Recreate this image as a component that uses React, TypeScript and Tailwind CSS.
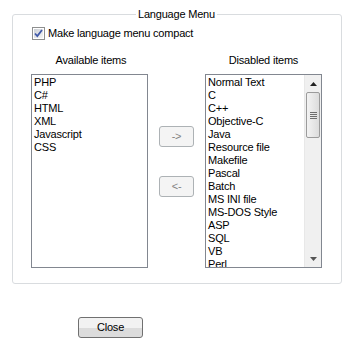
import React from "react";

const available = ["PHP", "C#", "HTML", "XML", "Javascript", "CSS"];
const disabled = [
  "Normal Text",
  "C",
  "C++",
  "Objective-C",
  "Java",
  "Resource file",
  "Makefile",
  "Pascal",
  "Batch",
  "MS INI file",
  "MS-DOS Style",
  "ASP",
  "SQL",
  "VB",
  "Perl",
];

function Checkbox() {
  return (
    <svg width="13" height="13" viewBox="0 0 13 13" className="shrink-0">
      <defs>
        <linearGradient id="cbg" x1="0" y1="0" x2="1" y2="1">
          <stop offset="0" stopColor="#cbcfd5" />
          <stop offset="1" stopColor="#f6f6f6" />
        </linearGradient>
      </defs>
      <rect x="0.5" y="0.5" width="12" height="12" fill="#fff" stroke="#8e8f8f" />
      <rect x="2" y="2" width="9" height="9" fill="url(#cbg)" />
      <path d="M3 6.5 L5.3 9 L10 3" fill="none" stroke="#4059a9" strokeWidth="1.8" />
    </svg>
  );
}

function ListBox({ items, scroll }: { items: string[]; scroll?: boolean }) {
  return (
    <div className="w-[117px] h-[194px] border border-[#828790] bg-white flex overflow-hidden">
      <div className="flex-1 pl-[2px] pt-[1px] overflow-hidden">
        {items.map((it) => (
          <div key={it} className="h-[13px] leading-[13px] whitespace-nowrap">
            {it}
          </div>
        ))}
      </div>
      {scroll && (
        <div className="w-[17px] h-full bg-[#f0f0f0] flex flex-col border-l border-[#e8e8e8]">
          <div className="h-[17px] flex items-center justify-center">
            <svg width="7" height="4" viewBox="0 0 7 4">
              <path d="M0 4 L3.5 0 L7 4 Z" fill="#222" />
            </svg>
          </div>
          <div className="mx-[1px] h-[46px] rounded-[2px] border border-[#9b9b9b] bg-gradient-to-r from-[#f3f3f3] to-[#dcdcdc] flex flex-col items-center justify-center gap-[1px]">
            <div className="w-[7px] h-[1px] bg-[#6d6d6d]" />
            <div className="w-[7px] h-[1px] bg-[#6d6d6d]" />
            <div className="w-[7px] h-[1px] bg-[#6d6d6d]" />
            <div className="w-[7px] h-[1px] bg-[#6d6d6d]" />
          </div>
          <div className="flex-1" />
          <div className="h-[17px] flex items-center justify-center">
            <svg width="7" height="4" viewBox="0 0 7 4">
              <path d="M0 0 L3.5 4 L7 0 Z" fill="#555" />
            </svg>
          </div>
        </div>
      )}
    </div>
  );
}

function ArrowButton({ label }: { label: string }) {
  return (
    <div className="w-[35px] h-[21px] rounded-[3px] border border-[#adb2b5] bg-[#f4f4f4] flex items-center justify-center text-[#838383]">
      {label}
    </div>
  );
}

export default function App() {
  return (
    <div className="w-[357px] h-[345px] bg-white text-black text-[11px] leading-[13px] tracking-[-0.2px] font-['Liberation_Sans',Arial,sans-serif] pt-[8px] pl-[12px]">
      <fieldset className="w-[330px] border border-[#d9dcdf] rounded-[3px] pl-[18px] pb-[15px]">
        <legend className="ml-[105px] px-[2px] leading-[13px]">Language Menu</legend>
        <div className="flex items-center gap-[3px] mt-[6px] ml-[1px] h-[13px]">
          <Checkbox />
          <span>Make language menu compact</span>
        </div>
        <div className="flex mt-[14px]">
          <div className="flex flex-col items-center">
            <div className="h-[13px] pl-[3px]">Available items</div>
            <div className="mt-[7px]">
              <ListBox items={available} />
            </div>
          </div>
          <div className="flex flex-col mx-[11px] pt-[72px] gap-[29px]">
            <ArrowButton label="->" />
            <ArrowButton label="<-" />
          </div>
          <div className="flex flex-col items-center">
            <div className="h-[13px]">Disabled items</div>
            <div className="mt-[7px]">
              <ListBox items={disabled} scroll />
            </div>
          </div>
        </div>
      </fieldset>
      <div className="mt-[33px] ml-[66px]">
        <button className="w-[65px] h-[21px] rounded-[3px] border border-[#707070] bg-gradient-to-b from-[#f2f2f2] from-50% to-[#dcdcdc] to-50% text-black leading-[13px]">
          Close
        </button>
      </div>
    </div>
  );
}
